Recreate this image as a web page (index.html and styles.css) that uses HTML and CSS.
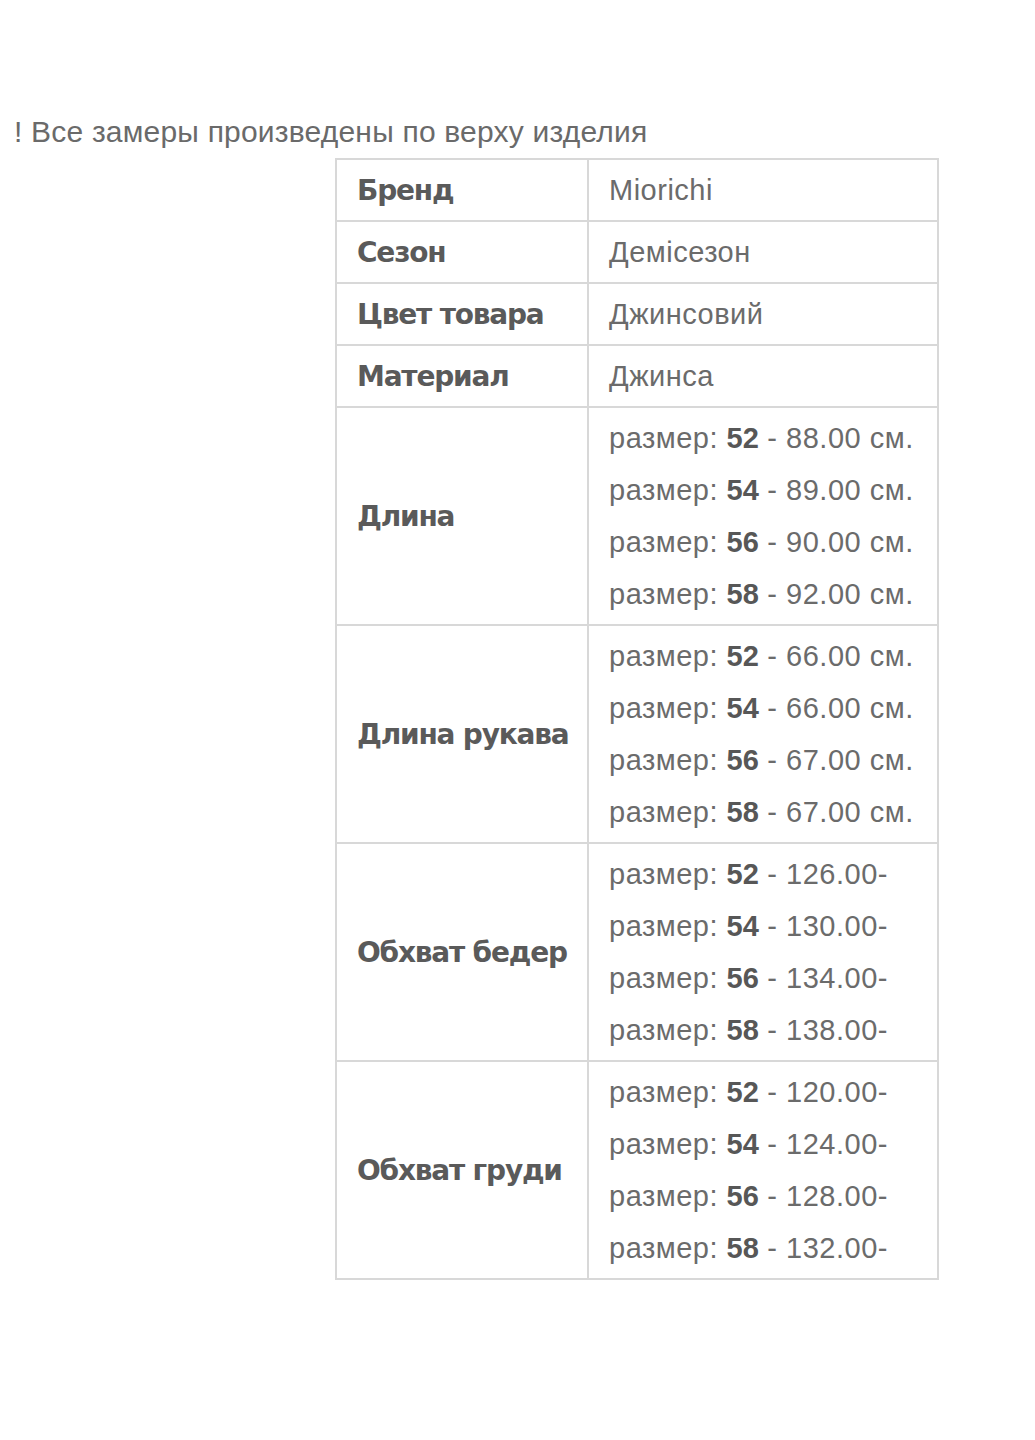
FILE: index.html
```html
<!DOCTYPE html>
<html lang="ru">
<head>
<meta charset="utf-8">
<title>Таблица размеров</title>
<link rel="stylesheet" href="styles.css">
</head>
<body>
<div class="page">
  <p class="note">! Все замеры произведены по верху изделия</p>
  <table class="specs">
    <tr><th>Бренд</th><td>Miorichi</td></tr>
    <tr><th>Сезон</th><td>Демісезон</td></tr>
    <tr><th>Цвет товара</th><td>Джинсовий</td></tr>
    <tr><th>Материал</th><td>Джинса</td></tr>
    <tr><th>Длина</th><td>
      <div class="line">размер: <b>52</b> - 88.00 см.</div>
      <div class="line">размер: <b>54</b> - 89.00 см.</div>
      <div class="line">размер: <b>56</b> - 90.00 см.</div>
      <div class="line">размер: <b>58</b> - 92.00 см.</div>
    </td></tr>
    <tr><th>Длина рукава</th><td>
      <div class="line">размер: <b>52</b> - 66.00 см.</div>
      <div class="line">размер: <b>54</b> - 66.00 см.</div>
      <div class="line">размер: <b>56</b> - 67.00 см.</div>
      <div class="line">размер: <b>58</b> - 67.00 см.</div>
    </td></tr>
    <tr><th>Обхват бедер</th><td>
      <div class="line">размер: <b>52</b> - 126.00-</div>
      <div class="line">размер: <b>54</b> - 130.00-</div>
      <div class="line">размер: <b>56</b> - 134.00-</div>
      <div class="line">размер: <b>58</b> - 138.00-</div>
    </td></tr>
    <tr><th>Обхват груди</th><td>
      <div class="line">размер: <b>52</b> - 120.00-</div>
      <div class="line">размер: <b>54</b> - 124.00-</div>
      <div class="line">размер: <b>56</b> - 128.00-</div>
      <div class="line">размер: <b>58</b> - 132.00-</div>
    </td></tr>
  </table>
</div>
</body>
</html>
```

FILE: styles.css
```css
html, body {
  margin: 0;
  padding: 0;
  background: #ffffff;
}

.page {
  padding: 110px 0 0 14px;
}

.note {
  margin: 0;
  font-family: "Liberation Sans", Arial, sans-serif;
  font-size: 30px;
  line-height: 44px;
  letter-spacing: 0.2px;
  color: #6a6a6a;
}

.specs {
  margin: 4px 0 0 321px;
  border-collapse: collapse;
  width: 604px;
  table-layout: fixed;
}

.specs th,
.specs td {
  border: 2px solid #d8d8d8;
  padding: 4px 20px;
  vertical-align: middle;
  text-align: left;
  white-space: nowrap;
  overflow: visible;
}

.specs th {
  width: 216px;
  padding-right: 14px;
  font-family: "DejaVu Sans", Verdana, sans-serif;
  font-weight: bold;
  font-size: 28px;
  letter-spacing: -1.2px;
  color: #5a5a5a;
}

.specs td {
  font-family: "Liberation Sans", Arial, sans-serif;
  font-size: 29px;
  line-height: 52px;
  letter-spacing: 0.5px;
  color: #6b6b6b;
}

.line {
  height: 52px;
}

.specs td b {
  font-weight: bold;
  letter-spacing: 0;
  color: #575757;
}
```
